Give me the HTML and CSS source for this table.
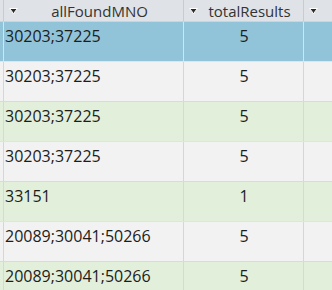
FILE: index.html
```html
<!DOCTYPE html>
<html>
<head>
<meta charset="utf-8">
<link rel="stylesheet" href="styles.css">
</head>
<body>
<div class="sheet">
  <div class="row head">
    <div class="cell c0"></div>
    <div class="cell c1 hcell"><svg class="arrow" width="9" height="7" viewBox="0 0 9 7"><path d="M0.5 0.5H8.5L6 3.5L4.5 6L3 3.5Z" fill="#2b2b2b" stroke="#fff" stroke-width="1" stroke-linejoin="round"/></svg><span class="htext">allFoundMNO</span></div>
    <div class="cell c2 hcell"><svg class="arrow" width="9" height="7" viewBox="0 0 9 7"><path d="M0.5 0.5H8.5L6 3.5L4.5 6L3 3.5Z" fill="#2b2b2b" stroke="#fff" stroke-width="1" stroke-linejoin="round"/></svg><span class="htext">totalResults</span></div>
    <div class="cell c3 hcell"><svg class="arrow" width="9" height="7" viewBox="0 0 9 7"><path d="M0.5 0.5H8.5L6 3.5L4.5 6L3 3.5Z" fill="#2b2b2b" stroke="#fff" stroke-width="1" stroke-linejoin="round"/></svg></div>
  </div>
  <div class="row sel">
    <div class="cell c0"></div><div class="cell c1">30203;37225</div><div class="cell c2 num">5</div><div class="cell c3"></div>
  </div>
  <div class="row gray">
    <div class="cell c0"></div><div class="cell c1">30203;37225</div><div class="cell c2 num">5</div><div class="cell c3"></div>
  </div>
  <div class="row green">
    <div class="cell c0"></div><div class="cell c1">30203;37225</div><div class="cell c2 num">5</div><div class="cell c3"></div>
  </div>
  <div class="row gray">
    <div class="cell c0"></div><div class="cell c1">30203;37225</div><div class="cell c2 num">5</div><div class="cell c3"></div>
  </div>
  <div class="row green">
    <div class="cell c0"></div><div class="cell c1">33151</div><div class="cell c2 num">1</div><div class="cell c3"></div>
  </div>
  <div class="row gray">
    <div class="cell c0"></div><div class="cell c1">20089;30041;50266</div><div class="cell c2 num">5</div><div class="cell c3"></div>
  </div>
  <div class="row green">
    <div class="cell c0"></div><div class="cell c1">20089;30041;50266</div><div class="cell c2 num">5</div><div class="cell c3"></div>
  </div>
</div>
</body>
</html>
```
FILE: styles.css
```css
html, body {
  margin: 0;
  padding: 0;
  background: #f2f2f2;
  overflow: hidden;
}
.sheet {
  width: 332px;
  font-family: "Open Sans", "Noto Sans", sans-serif;
  color: #1c1c1c;
}
.row {
  display: grid;
  grid-template-columns: 3px 180px 120px 1fr;
  height: 40px;
  box-sizing: border-box;
  border-bottom: 1px solid #dadada;
}
.row.head {
  height: 22px;
  background: #dfe2e6;
  border-bottom: 1px solid #d8cfd2;
}
.cell {
  box-sizing: border-box;
  border-left: 1px solid #d6d6d6;
  font-size: 16px;
  line-height: 22px;
  padding: 3px 0 0 1px;
  white-space: nowrap;
  overflow: hidden;
}
.cell.c0 {
  border-left: none;
}
.head .cell {
  border-left-color: #c9cbcf;
}
.hcell {
  display: flex;
  align-items: flex-start;
  padding: 0;
}
.arrow {
  flex: none;
  margin: 8px 0 0 5px;
}
.htext {
  flex: 1;
  text-align: center;
  font-size: 15px;
  line-height: 22px;
  color: #333;
  padding-right: 2px;
}
.num {
  text-align: center;
}
.sel {
  background: #92c4d9;
  border-bottom-color: #e4e4e4;
}
.sel .cell {
  border-left-color: #d2e4ec;
}
.gray {
  background: #f2f2f2;
}
.green {
  background: #e2efda;
  border-bottom-color: #dfe4dc;
}
.green .cell {
  border-left-color: #d3ddcd;
}
```
